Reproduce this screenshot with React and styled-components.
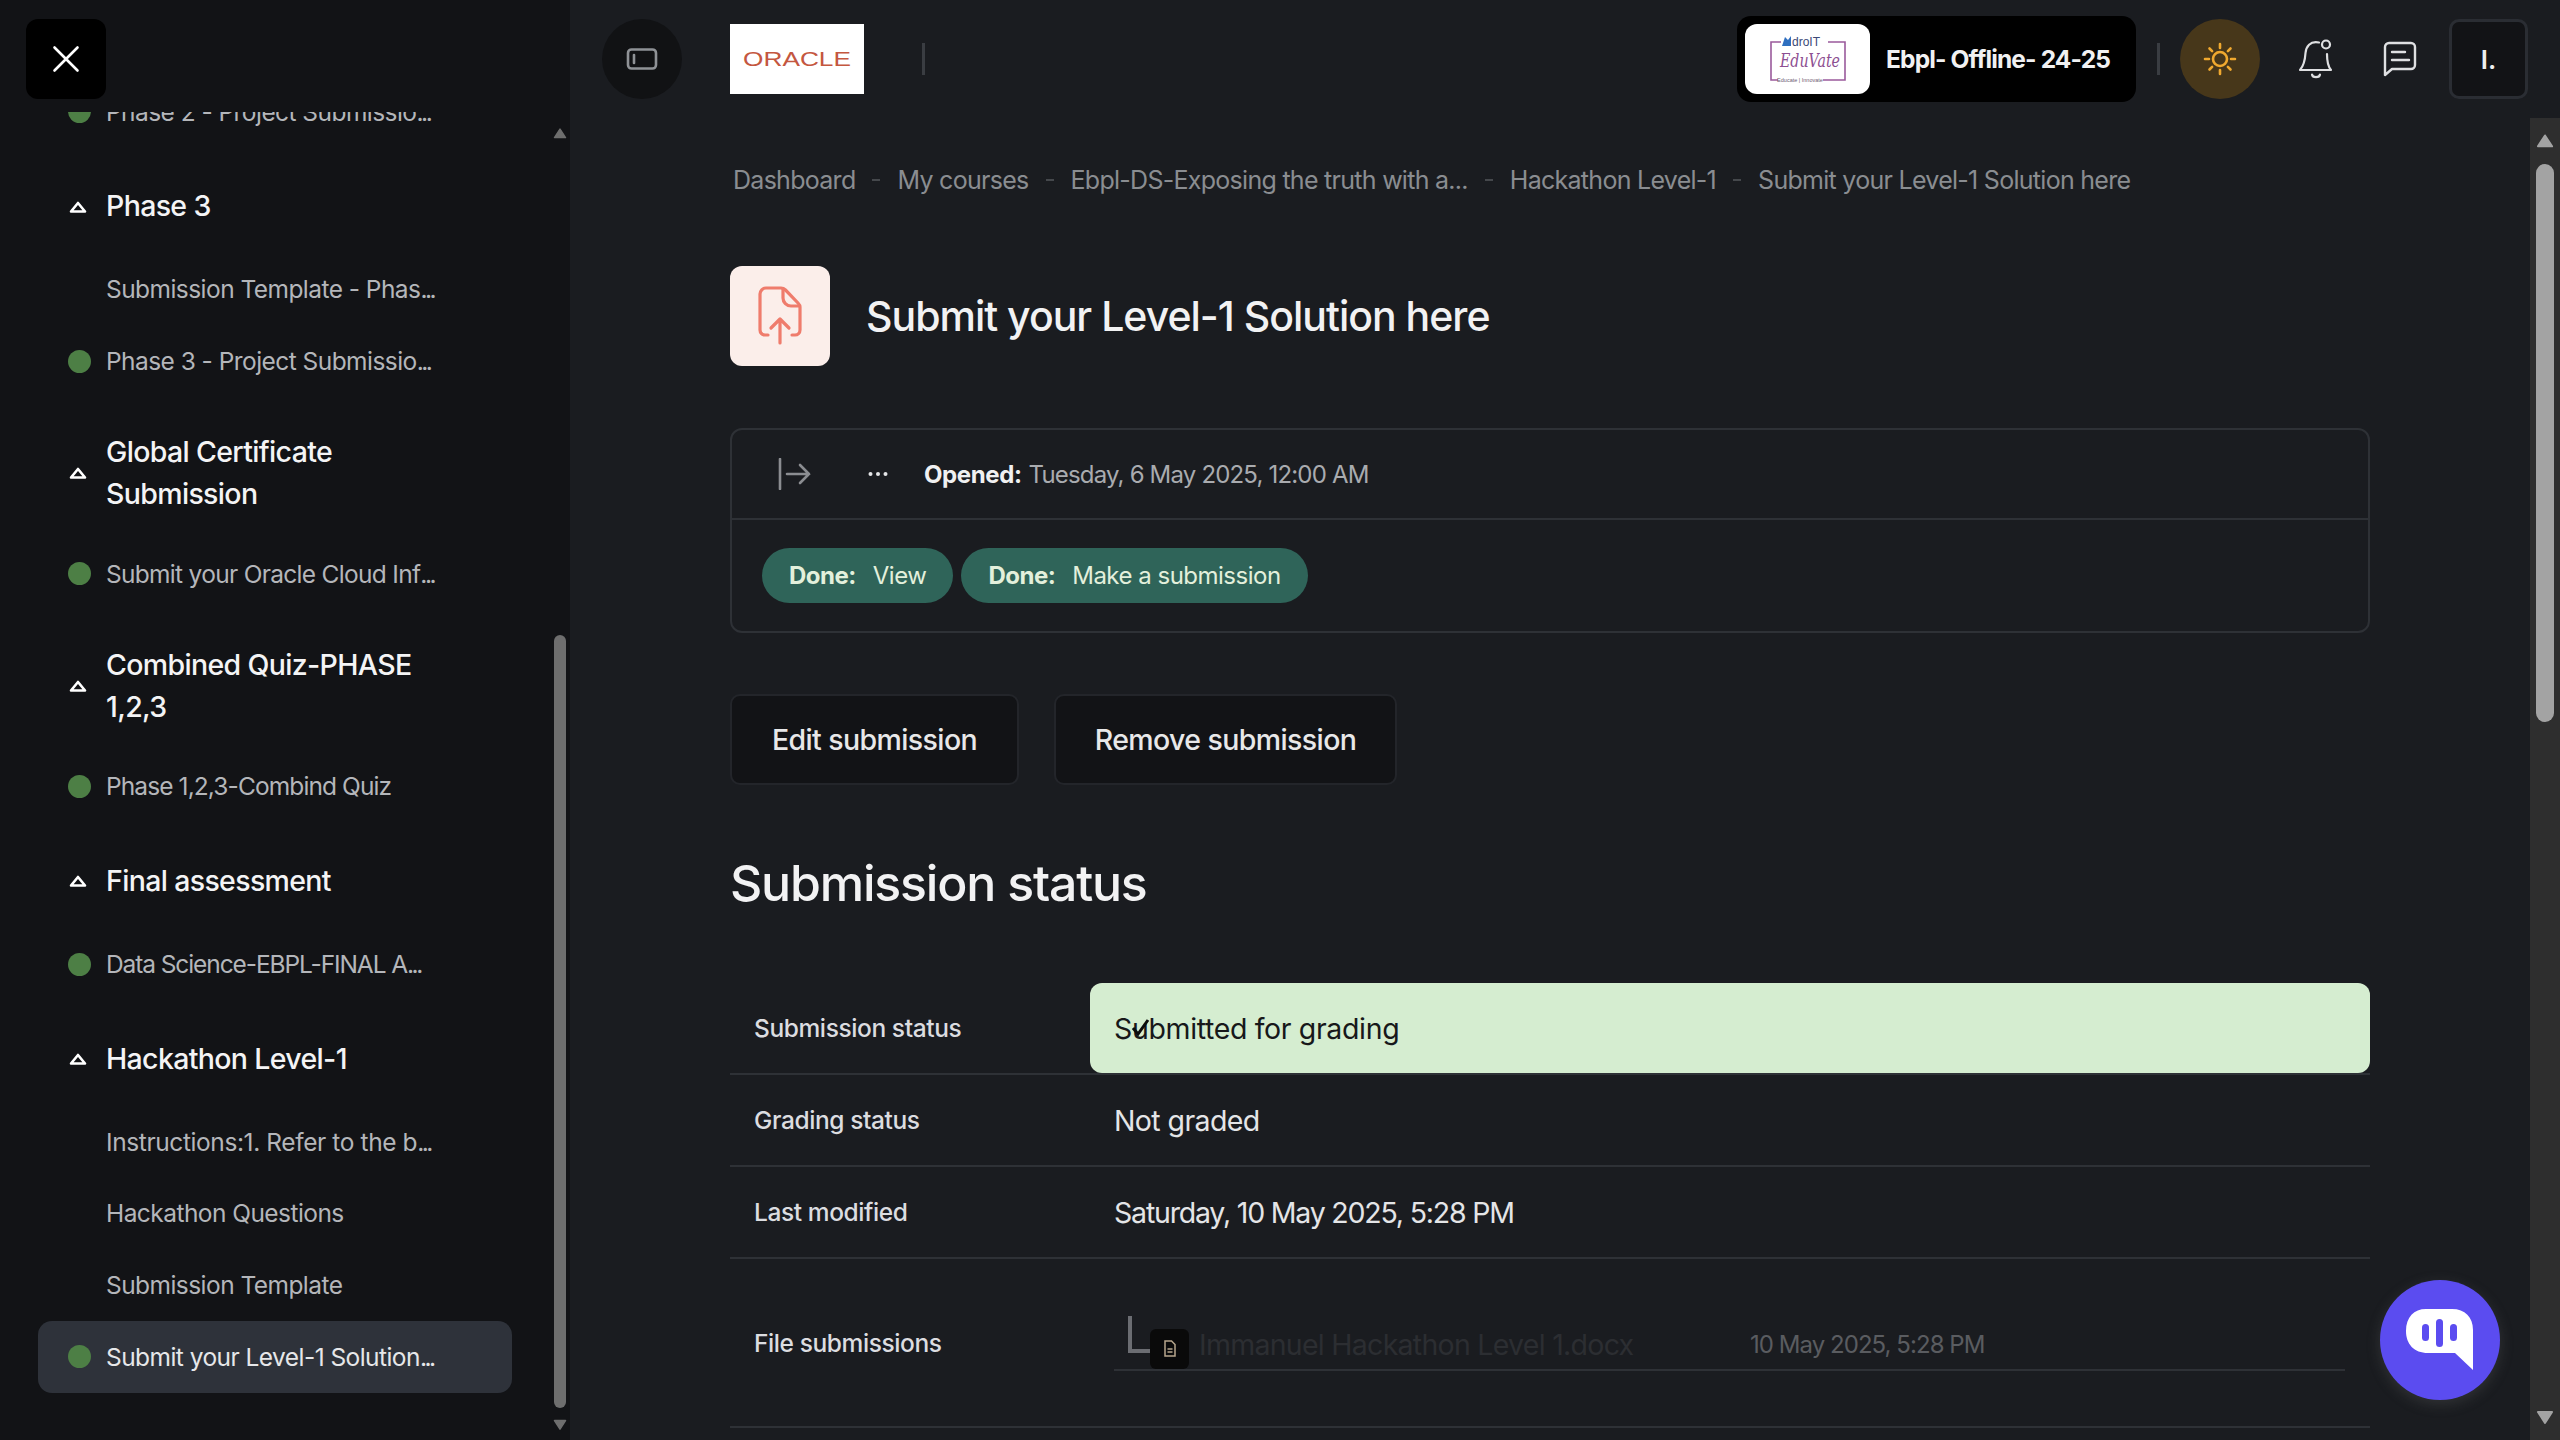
import React from "react";
import styled, { createGlobalStyle } from "styled-components";

const GlobalStyle = createGlobalStyle`
  html, body {
    margin: 0;
    padding: 0;
    background: #1a1c20;
    font-family: "Inter", "Liberation Sans", sans-serif;
    overflow: hidden;
  }
  * { box-sizing: border-box; }
`;

const Page = styled.div`
  display: flex;
  width: 2560px;
  height: 1440px;
  overflow: hidden;
`;

/* sidebar */
const Sidebar = styled.aside`
  width: 570px;
  height: 1440px;
  flex: none;
  display: flex;
  flex-direction: column;
  background: #121316;
`;
const SideHeader = styled.div`
  height: 112px;
  flex: none;
  padding: 19px 0 0 26px;
`;
const CloseButton = styled.div`
  width: 80px;
  height: 80px;
  display: flex;
  align-items: center;
  justify-content: center;
  background: #000;
  border-radius: 12px;
`;
const SideBody = styled.div`
  flex: 1;
  min-height: 0;
  display: flex;
`;
const SideList = styled.div`
  width: 550px;
  overflow: hidden;
  padding-left: 38px;
`;
const SideInner = styled.div`
  margin-top: -36px;
  width: 474px;
`;
const SectionHead = styled.div`
  display: flex;
  align-items: center;
  min-height: 50px;
  margin: 34px 0 22px;
  padding-left: 31px;
  color: #f4f4f5;
  font-size: 28.5px;
  font-weight: 500;
  line-height: 42.5px;
  letter-spacing: -0.65px;
  svg { flex: none; margin-right: 19px; }
`;
const SectionTitle = styled.span`
  width: 330px;
`;
const Item = styled.div`
  height: 71.67px;
  display: flex;
  align-items: center;
  padding-left: 30px;
  border-radius: 14px;
  font-size: 24.5px;
  letter-spacing: ${(p) => p.$spacing || -0.55}px;
  white-space: nowrap;
  color: ${(p) => (p.$active ? "#e6e7e9" : "#b4b6ba")};
  background: ${(p) => (p.$active ? "#2e323a" : "transparent")};
`;
const Ellipsis = styled.span`
  letter-spacing: -2.5px;
`;
const Dot = styled.span`
  width: 23px;
  height: 23px;
  flex: none;
  margin-right: 15px;
  border-radius: 50%;
  background: ${(p) => (p.$on ? "#4d7f45" : "transparent")};
`;
const SideScroll = styled.div`
  width: 20px;
  display: flex;
  flex-direction: column;
  align-items: center;
  padding-top: 16px;
`;
const SideThumb = styled.div`
  width: 12px;
  height: 773px;
  margin-top: 496px;
  margin-bottom: 11px;
  border-radius: 6px;
  background: #6e6e6e;
`;

/* main */
const Main = styled.main`
  flex: 1;
  min-width: 0;
  display: flex;
  flex-direction: column;
`;
const TopBar = styled.header`
  height: 118px;
  flex: none;
  display: flex;
  align-items: center;
  padding: 0 32px;
`;
const ToggleButton = styled.div`
  width: 80px;
  height: 80px;
  display: flex;
  align-items: center;
  justify-content: center;
  border-radius: 50%;
  background: #111214;
`;
const OracleLogo = styled.div`
  width: 134px;
  height: 70px;
  margin-left: 48px;
  display: flex;
  align-items: center;
  justify-content: center;
  background: #fff;
`;
const BarRule = styled.span`
  width: 3px;
  height: 32px;
  background: #3a3d42;
  margin: ${(p) => p.$margin};
`;
const TopRight = styled.div`
  margin-left: auto;
  display: flex;
  align-items: center;
`;
const BrandChip = styled.div`
  width: 399px;
  height: 86px;
  display: flex;
  align-items: center;
  padding-left: 8px;
  background: #000;
  border-radius: 14px;
`;
const BrandLogo = styled.div`
  width: 125px;
  height: 70px;
  flex: none;
  border-radius: 12px;
  background: #fff;
`;
const BrandName = styled.span`
  margin-left: 16px;
  color: #f1f1f2;
  font-size: 24.5px;
  font-weight: 700;
  letter-spacing: -0.85px;
  white-space: nowrap;
`;
const SunButton = styled.div`
  width: 80px;
  height: 80px;
  display: flex;
  align-items: center;
  justify-content: center;
  border-radius: 50%;
  background: #47371a;
`;
const IconSlot = styled.div`
  display: flex;
  margin-left: ${(p) => p.$left}px;
`;
const Avatar = styled.div`
  width: 79px;
  height: 80px;
  margin-left: 32px;
  display: flex;
  align-items: center;
  justify-content: center;
  background: #121316;
  border: 3px solid #2a2d33;
  border-radius: 10px;
  color: #eeeeef;
  font-size: 26px;
  font-weight: 600;
`;

const ContentArea = styled.div`
  flex: 1;
  min-height: 0;
  display: flex;
`;
const Content = styled.div`
  flex: 1;
  min-width: 0;
  overflow: hidden;
  padding: 44px 160px 0;
`;
const Crumbs = styled.nav`
  height: 36px;
  display: flex;
  align-items: center;
  padding-left: 3px;
  font-size: 25px;
  letter-spacing: -0.72px;
  color: #8a8d91;
  white-space: nowrap;
`;
const CrumbSep = styled.span`
  width: 8px;
  height: 2px;
  margin: 0 17px;
  background: #45484c;
`;
const TitleRow = styled.div`
  display: flex;
  align-items: center;
  margin-top: 68px;
`;
const TitleIcon = styled.div`
  width: 100px;
  height: 100px;
  display: flex;
  align-items: center;
  justify-content: center;
  background: #fbeeea;
  border-radius: 12px;
`;
const PageTitle = styled.h1`
  margin: 0 0 0 36px;
  color: #f2f2f3;
  font-size: 41px;
  font-weight: 500;
  letter-spacing: -1px;
`;
const InfoBox = styled.section`
  margin-top: 62px;
  border: 2px solid #2e3136;
  border-radius: 12px;
`;
const InfoTop = styled.div`
  height: 90px;
  display: flex;
  align-items: center;
  padding-left: 46px;
  border-bottom: 2px solid #2e3136;
  font-size: 24px;
  letter-spacing: -0.82px;
  color: #a9abaf;
  white-space: nowrap;
`;
const Dots = styled.span`
  display: flex;
  margin: 0 36px 0 57px;
`;
const InfoLabel = styled.b`
  color: #f0f0f1;
  font-weight: 700;
  letter-spacing: -0.4px;
  margin-right: 7px;
`;
const InfoBottom = styled.div`
  display: flex;
  gap: 8px;
  padding: 28px 30px 28px;
`;
const Chip = styled.div`
  height: 55px;
  display: flex;
  align-items: center;
  padding: 0 27px;
  border-radius: 28px;
  background: #2f6459;
  color: #e3f0dc;
  font-size: 24px;
  letter-spacing: -0.5px;
  b { font-weight: 700; margin-right: 17px; }
`;
const ButtonRow = styled.div`
  display: flex;
  gap: 35px;
  margin-top: 61px;
`;
const ActionButton = styled.div`
  width: ${(p) => p.$width}px;
  height: 91px;
  display: flex;
  align-items: center;
  justify-content: center;
  background: #121316;
  border: 2px solid #23252a;
  border-radius: 10px;
  color: #e8e8e9;
  font-size: 28.5px;
  font-weight: 500;
  letter-spacing: -0.6px;
`;
const SectionHeading = styled.h2`
  margin: 63px 0 65px;
  height: 70px;
  color: #f2f2f3;
  font-size: 50px;
  font-weight: 500;
  line-height: 70px;
  letter-spacing: -1.2px;
`;
const Row = styled.div`
  display: grid;
  grid-template-columns: 360px 1fr;
  align-items: center;
  height: ${(p) => p.$height || 92}px;
  border-bottom: 2px solid #2e3136;
`;
const RowLabel = styled.div`
  padding-left: 24px;
  color: #dcdde0;
  font-size: 24.5px;
  font-weight: 500;
  letter-spacing: -0.4px;
`;
const RowValue = styled.div`
  padding-left: 24px;
  color: #e4e5e7;
  font-size: 28.5px;
  letter-spacing: ${(p) => p.$spacing || -0.6}px;
`;
const StatusValue = styled(RowValue)`
  position: relative;
  height: 100%;
  display: flex;
  align-items: center;
  border-radius: 12px;
  background: #d5edd0;
  color: #17181a;
`;
const CheckMark = styled.span`
  position: absolute;
  left: 41px;
  top: 36px;
  display: flex;
`;
const FileTree = styled.div`
  width: 1231px;
  height: 56px;
  display: flex;
  align-items: flex-end;
  padding-left: 14px;
  border-bottom: 2px solid #2e3136;
`;
const TreeLine = styled.span`
  width: 22px;
  height: 37px;
  margin-bottom: 16px;
  border-left: 4px solid #6b6d72;
  border-bottom: 4px solid #6b6d72;
`;
const FileBadge = styled.span`
  width: 39px;
  height: 40px;
  flex: none;
  display: flex;
  align-items: center;
  justify-content: center;
  border-radius: 6px;
  background: #0a0a0a;
`;
const FileName = styled.span`
  width: 551px;
  margin-left: 10px;
  padding-bottom: 7px;
  color: #2c2e32;
  font-size: 28.5px;
  letter-spacing: -0.72px;
  white-space: nowrap;
`;
const FileDate = styled.span`
  padding-bottom: 10px;
  color: #5a5c60;
  font-size: 24px;
  letter-spacing: -0.95px;
`;
const MainScroll = styled.div`
  width: 30px;
  flex: none;
  display: flex;
  flex-direction: column;
  align-items: center;
  padding-top: 16px;
  background: #2e2e2e;
`;
const MainThumb = styled.div`
  width: 18px;
  height: 558px;
  margin-top: 16px;
  margin-bottom: 688px;
  border-radius: 9px;
  background: #a3a3a3;
`;
const ChatFab = styled.div`
  position: absolute;
  left: 2380px;
  top: 1280px;
  width: 120px;
  height: 120px;
  display: flex;
  align-items: center;
  justify-content: center;
  border-radius: 50%;
  background: #5b4cf0;
  box-shadow: 0 4px 14px rgba(120, 120, 120, 0.25);
`;

const sections = [
  {
    title: "Phase 3",
    items: [
      { text: "Submission Template - Phas", cut: true },
      { text: "Phase 3 - Project Submissio", cut: true, done: true },
    ],
  },
  {
    title: "Global Certificate Submission",
    items: [{ text: "Submit your Oracle Cloud Inf", cut: true, done: true, spacing: -0.7 }],
  },
  {
    title: "Combined Quiz-PHASE 1,2,3",
    items: [{ text: "Phase 1,2,3-Combind Quiz", done: true, spacing: -0.9 }],
  },
  {
    title: "Final assessment",
    items: [{ text: "Data Science-EBPL-FINAL A", cut: true, done: true, spacing: -1.1 }],
  },
  {
    title: "Hackathon Level-1",
    items: [
      { text: "Instructions:1. Refer to the b", cut: true, spacing: -0.4 },
      { text: "Hackathon Questions" },
      { text: "Submission Template" },
      { text: "Submit your Level-1 Solution", cut: true, done: true, active: true },
    ],
  },
];

const crumbs = [
  "Dashboard",
  "My courses",
  "Ebpl-DS-Exposing the truth with a...",
  "Hackathon Level-1",
  "Submit your Level-1 Solution here",
];

function Arrow({ down, color, size = 14 }) {
  return (
    <svg width={size} height={size * 0.8} viewBox="0 0 14 11" style={{ flex: "none" }}>
      <path
        d={down ? "M1.5 1.5h11L7 10z" : "M7 1l5.5 8.5h-11z"}
        fill={color}
        stroke={color}
        strokeWidth="1.5"
        strokeLinejoin="round"
      />
    </svg>
  );
}

function EduvateLogo() {
  return (
    <svg width="125" height="70" viewBox="0 0 125 70">
      <path
        d="M36 18H26V56H33M78 56H100V18H83"
        fill="none"
        stroke="#9a5a9c"
        strokeWidth="1.6"
      />
      <path d="M40 13l3 3 3-4v10h-9z" fill="#2f6fc0" />
      <text x="47" y="22" fontSize="12" fill="#3c4a78" fontFamily="Liberation Sans, sans-serif">
        droIT
      </text>
      <text
        x="65"
        y="43"
        textAnchor="middle"
        fontSize="18"
        fontStyle="italic"
        fill="#8d4f92"
        fontFamily="DejaVu Serif, serif"
        textLength="60"
        lengthAdjust="spacingAndGlyphs"
      >
        EduVate
      </text>
      <text x="55" y="58" textAnchor="middle" fontSize="5.5" fill="#6d5a72" fontFamily="Liberation Sans, sans-serif">
        Educate | Innovate
      </text>
    </svg>
  );
}

export default function App() {
  return (
    <Page>
      <GlobalStyle />
      <Sidebar>
        <SideHeader>
          <CloseButton>
            <svg width="28" height="28" viewBox="0 0 28 28">
              <path d="M2.5 2.5l23 23M25.5 2.5l-23 23" stroke="#fff" strokeWidth="2.6" strokeLinecap="round" />
            </svg>
          </CloseButton>
        </SideHeader>
        <SideBody>
          <SideList>
            <SideInner>
              <Item>
                <Dot $on />
                Phase 2 - Project Submissio<Ellipsis>...</Ellipsis>
              </Item>
              {sections.map((section) => (
                <div key={section.title}>
                  <SectionHead>
                    <svg width="18" height="12" viewBox="0 0 18 12">
                      <path d="M9 2L16 10.5H2z" fill="none" stroke="#fff" strokeWidth="2.6" strokeLinejoin="round" />
                    </svg>
                    <SectionTitle>{section.title}</SectionTitle>
                  </SectionHead>
                  {section.items.map((item) => (
                    <Item key={item.text} $active={item.active} $spacing={item.spacing}>
                      <Dot $on={item.done} />
                      <span>
                        {item.text}
                        {item.cut && <Ellipsis>...</Ellipsis>}
                      </span>
                    </Item>
                  ))}
                </div>
              ))}
            </SideInner>
          </SideList>
          <SideScroll>
            <Arrow color="#6e6e6e" />
            <SideThumb />
            <Arrow down color="#6e6e6e" />
          </SideScroll>
        </SideBody>
      </Sidebar>

      <Main>
        <TopBar>
          <ToggleButton>
            <svg width="32" height="24" viewBox="0 0 32 24" fill="none" stroke="#8f9296" strokeWidth="2.6">
              <rect x="2" y="2.5" width="28" height="19" rx="3.5" />
              <path d="M8 8v8" strokeLinecap="round" />
            </svg>
          </ToggleButton>
          <OracleLogo>
            <svg width="112" height="26" viewBox="0 0 112 26">
              <text
                x="2"
                y="20"
                fontSize="19.5"
                fill="#c4573f"
                fontFamily="Liberation Sans, sans-serif"
                textLength="108"
                lengthAdjust="spacingAndGlyphs"
              >
                ORACLE
              </text>
            </svg>
          </OracleLogo>
          <BarRule $margin="0 0 0 58px" />
          <TopRight>
            <BrandChip>
              <BrandLogo>
                <EduvateLogo />
              </BrandLogo>
              <BrandName>Ebpl- Offline- 24-25</BrandName>
            </BrandChip>
            <BarRule $margin="0 20px 0 21px" />
            <SunButton>
              <svg width="34" height="34" viewBox="0 0 34 34" fill="none" stroke="#f0a92f" strokeWidth="2.6" strokeLinecap="round">
                <circle cx="17" cy="17" r="7" />
                <path d="M17 2v4M17 28v4M2 17h4M28 17h4M6.5 6.5l2.6 2.6M24.9 24.9l2.6 2.6M6.5 27.5l2.6-2.6M24.9 9.1l2.6-2.6" />
              </svg>
            </SunButton>
            <IconSlot $left={38}>
              <svg width="36" height="40" viewBox="0 0 36 40" fill="none" stroke="#dfe0e2" strokeWidth="2.2" strokeLinecap="round" strokeLinejoin="round">
                <path d="M21 3.500C12 1.500 8 8 7.500 14c-.5 8-2 13-5.500 17h31C30 27.500 29 23 29 15" />
                <circle cx="28" cy="5.500" r="4" />
                <path d="M14 35.500c.5 3.500 7.500 3.500 8 0" />
              </svg>
            </IconSlot>
            <IconSlot $left={49}>
              <svg width="34" height="36" viewBox="0 0 34 36" fill="none" stroke="#dfe0e2" strokeWidth="2.4" strokeLinecap="round" strokeLinejoin="round">
                <path d="M6 2h22a4 4 0 0 1 4 4v18a4 4 0 0 1-4 4H9l-7 6V6a4 4 0 0 1 4-4z" />
                <path d="M9 11h13M9 19h17" />
              </svg>
            </IconSlot>
            <Avatar>I.</Avatar>
          </TopRight>
        </TopBar>

        <ContentArea>
          <Content>
            <Crumbs>
              {crumbs.map((crumb, i) => (
                <React.Fragment key={crumb}>
                  {i > 0 && <CrumbSep />}
                  {crumb}
                </React.Fragment>
              ))}
            </Crumbs>
            <TitleRow>
              <TitleIcon>
                <svg width="46" height="60" viewBox="0 0 46 60" fill="none" stroke="#ef7c6c" strokeWidth="3.2" strokeLinecap="round" strokeLinejoin="round">
                  <path d="M11 49H8a5 5 0 0 1-5-5V8a6 6 0 0 1 6-6h15c2 0 3 .5 4.5 2L41 17c1.500 1.500 2 2.500 2 4v23a5 5 0 0 1-5 5h-3" />
                  <path d="M26 3v9a8 8 0 0 0 8 8h8" />
                  <path d="M23 57V33M14 42l9-9 9 9" />
                </svg>
              </TitleIcon>
              <PageTitle>Submit your Level-1 Solution here</PageTitle>
            </TitleRow>
            <InfoBox>
              <InfoTop>
                <svg width="33" height="32" viewBox="0 0 33 32" fill="none" stroke="#8b8d91" strokeWidth="2.6" strokeLinecap="round" style={{ flex: "none" }}>
                  <path d="M2 1v30" />
                  <path d="M9 16h22M22 7l9 9-9 9" />
                </svg>
                <Dots>
                  <svg width="20" height="6" viewBox="0 0 20 6" fill="#e4e5e7">
                    <circle cx="2.500" cy="3" r="2" />
                    <circle cx="10" cy="3" r="2" />
                    <circle cx="17.500" cy="3" r="2" />
                  </svg>
                </Dots>
                <InfoLabel>Opened:</InfoLabel>
                Tuesday, 6 May 2025, 12:00 AM
              </InfoTop>
              <InfoBottom>
                <Chip>
                  <b>Done:</b>View
                </Chip>
                <Chip>
                  <b>Done:</b>Make a submission
                </Chip>
              </InfoBottom>
            </InfoBox>
            <ButtonRow>
              <ActionButton $width={289}>Edit submission</ActionButton>
              <ActionButton $width={343}>Remove submission</ActionButton>
            </ButtonRow>
            <SectionHeading>Submission status</SectionHeading>
            <Row>
              <RowLabel>Submission status</RowLabel>
              <StatusValue $spacing={-0.35}>
                <CheckMark>
                  <svg width="20" height="18" viewBox="0 0 20 18" fill="none" stroke="#0c0c0c" strokeWidth="3">
                    <path d="M2 9l5 6L17 1" />
                  </svg>
                </CheckMark>
                Submitted for grading
              </StatusValue>
            </Row>
            <Row>
              <RowLabel>Grading status</RowLabel>
              <RowValue>Not graded</RowValue>
            </Row>
            <Row>
              <RowLabel>Last modified</RowLabel>
              <RowValue $spacing={-1.2}>Saturday, 10 May 2025, 5:28 PM</RowValue>
            </Row>
            <Row $height={169}>
              <RowLabel>File submissions</RowLabel>
              <RowValue>
                <FileTree>
                  <TreeLine />
                  <FileBadge>
                    <svg width="12" height="17" viewBox="0 0 12 17" fill="none" stroke="#b8a78d" strokeWidth="1.5">
                      <path d="M1 1h6.500L11 4.500V16H1z" />
                      <path d="M3.500 9h5M3.500 12h5" />
                    </svg>
                  </FileBadge>
                  <FileName>Immanuel Hackathon Level 1.docx</FileName>
                  <FileDate>10 May 2025, 5:28 PM</FileDate>
                </FileTree>
              </RowValue>
            </Row>
          </Content>
          <MainScroll>
            <Arrow color="#a3a3a3" size={18} />
            <MainThumb />
            <Arrow down color="#a3a3a3" size={18} />
          </MainScroll>
        </ContentArea>
      </Main>

      <ChatFab>
        <svg width="68" height="62" viewBox="0 0 68 62">
          <path d="M20 0h26c13 0 21 8 21 21v40L49 44H22C8 44 0 35 0 22 0 8 8 0 20 0z" fill="#fff" />
          <rect x="16" y="15" width="7" height="17" rx="3.500" fill="#5b4cf0" />
          <rect x="30" y="10" width="7" height="28" rx="3.500" fill="#5b4cf0" />
          <rect x="44" y="15" width="7" height="17" rx="3.500" fill="#5b4cf0" />
        </svg>
      </ChatFab>
    </Page>
  );
}
